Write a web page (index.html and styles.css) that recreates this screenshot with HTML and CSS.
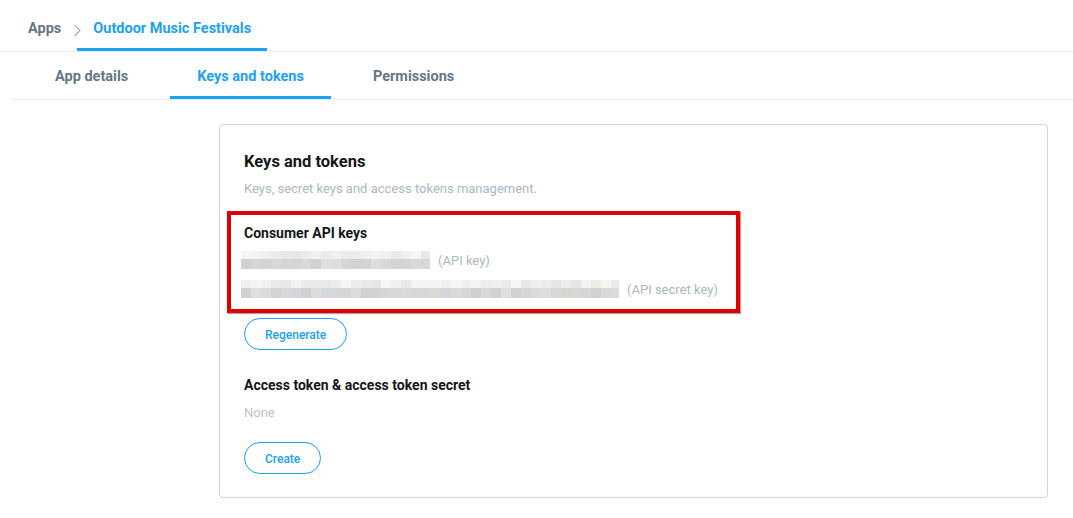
FILE: index.html
```html
<!DOCTYPE html>
<html lang="en">
<head>
  <meta charset="UTF-8">
  <meta name="viewport" content="width=device-width, initial-scale=1">
  <title>Keys and tokens - Outdoor Music Festivals</title>
  <link rel="stylesheet" href="styles.css">
</head>
<body>

  <nav class="breadcrumb">
    <a href="#" class="crumb">Apps</a>
    <svg class="chevron" width="8" height="13" viewBox="0 0 8 13">
      <path d="M1.5 1l5.5 5.5-5.5 5.5" fill="none" stroke="#aab8c2" stroke-width="1.4"/>
    </svg>
    <a href="#" class="crumb current">Outdoor Music Festivals</a>
  </nav>

  <div class="tabs">
    <a href="#" class="tab">App details</a>
    <a href="#" class="tab active">Keys and tokens</a>
    <a href="#" class="tab">Permissions</a>
  </div>

  <main class="content">
    <section class="card">
      <h2>Keys and tokens</h2>
      <p class="subtitle">Keys, secret keys and access tokens management.</p>

      <div class="highlight">
        <h3>Consumer API keys</h3>
        <div class="key-row">
          <span class="blurred" data-width="189"></span>
          <span class="key-label">(API key)</span>
        </div>
        <div class="key-row">
          <span class="blurred" data-width="378"></span>
          <span class="key-label">(API secret key)</span>
        </div>
      </div>
      <button class="btn">Regenerate</button>

      <h3 class="section-title">Access token &amp; access token secret</h3>
      <p class="muted">None</p>
      <button class="btn btn-create">Create</button>
    </section>
  </main>

  <script>
    // pixelated placeholders for the hidden keys
    let seed = 17;
    function rnd() {
      seed = (seed * 9301 + 49297) % 233280;
      return seed / 233280;
    }

    document.querySelectorAll(".blurred").forEach(el => {
      const ns = "http://www.w3.org/2000/svg";
      const width = Number(el.dataset.width);
      const svg = document.createElementNS(ns, "svg");
      svg.setAttribute("width", width);
      svg.setAttribute("height", 18);

      for (let x = 0; x < width; x += 10) {
        [[0, 8, 230], [8, 10, 208]].forEach(([y, h, base]) => {
          const v = Math.round(base + rnd() * 16);
          const tint = Math.round((rnd() - 0.5) * 8);
          const rect = document.createElementNS(ns, "rect");
          rect.setAttribute("x", x);
          rect.setAttribute("y", y);
          rect.setAttribute("width", 10);
          rect.setAttribute("height", h);
          rect.setAttribute("fill", `rgb(${v + tint}, ${v}, ${v - tint})`);
          svg.appendChild(rect);
        });
      }
      el.appendChild(svg);
    });
  </script>
</body>
</html>
```

FILE: styles.css
```css
* {
  box-sizing: border-box;
}

body {
  margin: 0;
  font-family: Roboto, "Noto Sans", sans-serif;
  color: #14171a;
  background: #fff;
}

a {
  text-decoration: none;
}

/* top breadcrumb */
.breadcrumb {
  display: flex;
  align-items: flex-end;
  height: 52px;
  padding-left: 28px;
  border-bottom: 1px solid #e6ecf0;
}

.crumb {
  font-size: 14.5px;
  font-weight: 700;
  line-height: 20px;
  color: #657786;
  padding: 19px 0 12px;
}

.chevron {
  align-self: flex-start;
  margin: 24px -4px 0 12px;
}

.crumb.current {
  color: #1da1f2;
  padding: 19px 16px 9px;
  border-bottom: 3px solid #1da1f2;
}

/* tabs */
.tabs {
  display: flex;
  margin-left: 12px;
  padding-left: 16px;
  border-bottom: 1px solid #e6ecf0;
}

.tab {
  font-size: 14.5px;
  font-weight: 700;
  line-height: 20px;
  color: #657786;
  padding: 15px 27px 9px;
  margin-right: 15px;
  border-bottom: 3px solid transparent;
}

.tab.active {
  color: #1da1f2;
  border-bottom-color: #1da1f2;
}

/* card */
.content {
  padding: 24px 25px 20px 219px;
}

.card {
  border: 1px solid #ccd6dd;
  border-radius: 4px;
  padding: 24px 24px 23px;
}

.card h2 {
  margin: 0;
  padding-top: 2px;
  font-size: 16.5px;
  line-height: 22px;
  font-weight: 700;
}

.subtitle {
  margin: 5px 0 0;
  padding-top: 2px;
  font-size: 13px;
  line-height: 18px;
  color: #aab8c2;
}

h3 {
  margin: 0;
  padding-top: 2px;
  font-size: 14px;
  line-height: 18px;
  font-weight: 700;
}

.highlight {
  width: 513px;
  margin: 13px 0 0 -17px;
  padding: 7px 13px 6px;
  border: 4px solid #e00000;
  box-shadow: 1px 1px 1px rgba(0,0,0,0.35);
}

.key-row {
  display: flex;
  align-items: center;
  height: 29px;
  white-space: nowrap;
}

.key-row:first-of-type {
  margin-top: 3px;
}

.blurred {
  display: block;
  flex-shrink: 0;
  margin-left: -3px;
}

.blurred svg {
  display: block;
}

.key-label {
  margin-left: 8px;
  padding-top: 2px;
  font-size: 13px;
  color: #aab8c2;
}

.btn {
  display: block;
  height: 32px;
  margin-top: 5px;
  padding: 2px 20px 0;
  border: 1px solid #1da1f2;
  border-radius: 100px;
  background: #fff;
  color: #1da1f2;
  font: 500 12px/28px Roboto, "Noto Sans", sans-serif;
  cursor: pointer;
}

.section-title {
  margin-top: 24px;
}

.muted {
  margin: 8px 0 0;
  padding-top: 2px;
  font-size: 13px;
  line-height: 18px;
  color: #bcc5cc;
}

.btn-create {
  margin-top: 20px;
}
```
